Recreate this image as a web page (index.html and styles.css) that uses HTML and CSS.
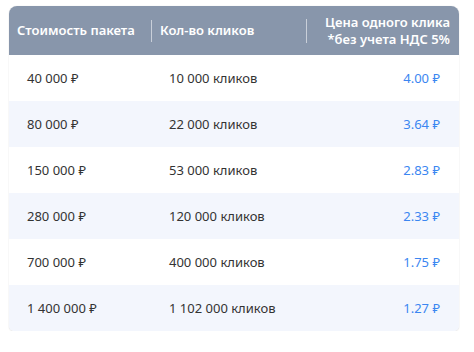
FILE: index.html
```html
<!DOCTYPE html>
<html lang="ru">
<head>
<meta charset="utf-8">
<link rel="stylesheet" href="styles.css">
</head>
<body>
<div class="card">
  <div class="row head">
    <div class="cell h1">Стоимость пакета</div>
    <div class="cell h2">Кол-во кликов</div>
    <div class="cell h3">Цена одного клика<br>*без учета НДС 5%</div>
  </div>
  <div class="row">
    <div class="cell c1">40 000 ₽</div>
    <div class="cell c2">10 000 кликов</div>
    <div class="cell c3">4.00 ₽</div>
  </div>
  <div class="row alt">
    <div class="cell c1">80 000 ₽</div>
    <div class="cell c2">22 000 кликов</div>
    <div class="cell c3">3.64 ₽</div>
  </div>
  <div class="row">
    <div class="cell c1">150 000 ₽</div>
    <div class="cell c2">53 000 кликов</div>
    <div class="cell c3">2.83 ₽</div>
  </div>
  <div class="row alt">
    <div class="cell c1">280 000 ₽</div>
    <div class="cell c2">120 000 кликов</div>
    <div class="cell c3">2.33 ₽</div>
  </div>
  <div class="row">
    <div class="cell c1">700 000 ₽</div>
    <div class="cell c2">400 000 кликов</div>
    <div class="cell c3">1.75 ₽</div>
  </div>
  <div class="row alt">
    <div class="cell c1">1 400 000 ₽</div>
    <div class="cell c2">1 102 000 кликов</div>
    <div class="cell c3">1.27 ₽</div>
  </div>
</div>
</body>
</html>
```

FILE: styles.css
```css
* { box-sizing: border-box; }
html, body { margin: 0; background: #ffffff; }
body {
  padding: 6px 15px 0 9px;
  font-family: "Noto Sans", "Open Sans", sans-serif;
  font-size: 13px;
  color: #333333;
}
.card {
  width: 450px;
  border-radius: 8px 8px 5px 5px;
  overflow: hidden;
  background: #fff;
  box-shadow: 0 0 1px rgba(0,0,0,0.18), 0 1px 2px rgba(0,0,0,0.06);
}
.row {
  display: grid;
  grid-template-columns: 142px 155px 153px;
  height: 46px;
  align-items: center;
}
.row.alt { background: #f3f6fd; }
.head {
  height: 49px;
  background: #8896ab;
  color: #ffffff;
  font-weight: 600;
}
.cell { line-height: 17px; }
.h1 { padding-left: 8px; }
.h2, .h3 { border-left: 1px solid rgba(255,255,255,0.55); height: 22px; display: flex; align-items: center; }
.h2 { padding-left: 8px; }
.h3 { justify-content: flex-end; text-align: right; padding-right: 9px; height: 24px; }
.c1 { padding-left: 18px; }
.c2 { padding-left: 18px; }
.c3 { text-align: right; padding-right: 19px; color: #3b86f1; }
```
